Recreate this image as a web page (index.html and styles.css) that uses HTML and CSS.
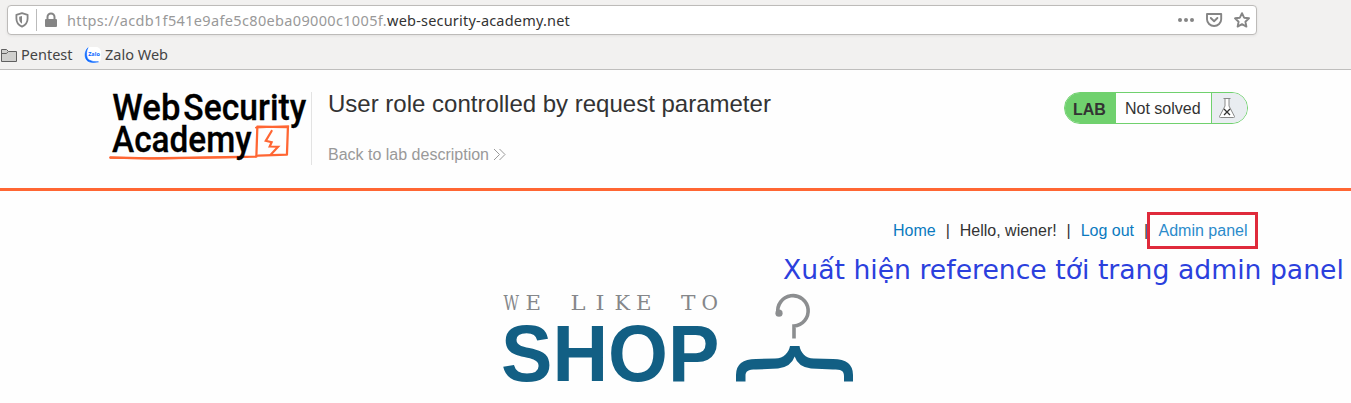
FILE: index.html
```html
<!DOCTYPE html>
<html lang="en">
<head>
<meta charset="utf-8">
<title>User role controlled by request parameter</title>
<link rel="stylesheet" href="styles.css">
</head>
<body>
<div class="browser">
  <div class="urlbar">
    <svg class="shield" width="14" height="16" viewBox="0 0 14 16"><path d="M7 1.2L12.6 2.8V6.5C12.6 10.5 10.5 13.2 7 14.7C3.500 13.200 1.400 10.500 1.400 6.500V2.800Z" fill="none" stroke="#858585" stroke-width="1.8" stroke-linejoin="round"/><path d="M7 4L4.200 4.700V6.500C4.200 9 5.200 10.700 7 11.800Z" fill="#858585"/></svg>
    <span class="divider"></span>
    <svg class="lock" width="14" height="16" viewBox="0 0 14 16"><path d="M3.500 8V5a3.500 3.500 0 0 1 7 0V8" fill="none" stroke="#858585" stroke-width="2"/><rect x="1" y="7" width="12" height="8" rx="1" fill="#858585"/></svg>
    <span class="url"><span class="sub">https://acdb1f541e9afe5c80eba09000c1005f.</span><span class="domain">web-security-academy.net</span></span>
    <svg class="actions" width="76" height="18" viewBox="0 0 76 18" fill="none" stroke="#858585" stroke-width="1.900" stroke-linejoin="round" stroke-linecap="round"><g fill="#858585" stroke="none"><circle cx="4" cy="9" r="2"/><circle cx="10" cy="9" r="2"/><circle cx="16" cy="9" r="2"/></g><path d="M31 3H45.200V8.200a7.100 6.800 0 0 1-14.200 0ZM34.800 7L38.100 10.200L41.400 7"/><path d="M66 2.200L68.100 6.700L73 7.300L69.400 10.700L70.400 15.600L66 13.200L61.600 15.600L62.600 10.700L59 7.300L63.900 6.700Z"/></svg>
  </div>
  <div class="bookmarks">
    <svg width="17" height="16" viewBox="0 0 17 16"><path d="M1.500 14.500V2.500H6.500L8.500 4.500H16.500V14.500Z" fill="#d0d0ce" stroke="#606060"/><path d="M2 6.500H6.500L8 4.800" fill="none" stroke="#606060"/></svg>
    <span class="pentest">Pentest</span>
    <svg class="zalo" width="16" height="16" viewBox="0 0 16 16"><rect width="16" height="16" rx="5" fill="#fff"/><path d="M3 .7C-1 4.500-.7 12 3 14.300Q6 16.300 13.500 14.800Q8 15.300 4 13C.8 10.500 1 4 3 .7Z" fill="#0b68ff" stroke="#0b68ff" stroke-width=".6"/><text x="3.200" y="9.300" textLength="11.600" lengthAdjust="spacingAndGlyphs" class="zalo-text">Zalo</text></svg>
    <span class="zaloweb">Zalo Web</span>
  </div>
</div>
<header class="lab-header">
  <svg class="academy" width="203" height="74" viewBox="0 0 203 74">
    <g fill="none" stroke="#ff6633" stroke-linejoin="round" stroke-linecap="round"><path d="M1 66.400L40 67.200L149 65.600L150 35.200L181 35.600L180 63.500L151 64.500" stroke-width="2.300"/><path d="M1 66.600L50 67.300L140 65.800" stroke-width="2"/><path d="M148.500 36L181.500 34.500" stroke-width="1.800"/><path d="M164.500 39.500L158.500 49.500L164.500 51L162.500 55.300L171 55.500L163.500 63.500" stroke-width="2.200" stroke-linejoin="miter"/></g>
    <g class="academy-text"><text x="3" y="28.600" textLength="69" lengthAdjust="spacingAndGlyphs">Web</text><text x="75" y="28.600" textLength="124.500" lengthAdjust="spacingAndGlyphs">Security</text><text x="2.700" y="61.300" textLength="141.500" lengthAdjust="spacingAndGlyphs">Academy</text></g>
  </svg>
  <div class="title-block">
    <h1>User role controlled by request parameter</h1>
    <a class="back">Back to lab description<svg width="13" height="14" viewBox="0 0 13 14" fill="none" stroke="#999" stroke-width="1"><path d="M1 1L6.500 6.500L1 12M6.500 1L12 6.500L6.500 12"/></svg></a>
  </div>
  <div class="status"><b>LAB</b><span class="state">Not solved</span><span class="flask"><svg width="18" height="22" viewBox="0 0 18 22" fill="none"><path d="M5.500 1.500H12.500M7 2V9L1.500 19.500Q1.200 20.500 2.500 20.500H15.500Q16.800 20.500 16.500 19.500L11 9V2" fill="#fff" stroke="#888"/><path d="M6 12L12 18M12 12L6 18" stroke="#333" stroke-width="1.300"/></svg></span></div>
</header>
<main class="shop">
  <nav class="links"><a>Home</a><i>|</i><span>Hello, wiener!</span><i>|</i><a>Log out</a><i>|</i><a class="admin">Admin panel</a></nav>
  <div class="note">Xuất hiện reference tới trang admin panel</div>
  <svg class="brand" width="352" height="92" viewBox="0 0 352 92">
    <g class="like">
      <text x="1.500" y="17" textLength="15.500" lengthAdjust="spacingAndGlyphs">W</text><text x="23.500" y="17" textLength="15.500" lengthAdjust="spacingAndGlyphs">E</text>
      <text x="68.500" y="17" textLength="15" lengthAdjust="spacingAndGlyphs">L</text><text x="93.500" y="17" textLength="9" lengthAdjust="spacingAndGlyphs">I</text><text x="112.500" y="17" textLength="15.500" lengthAdjust="spacingAndGlyphs">K</text><text x="134" y="17" textLength="15.500" lengthAdjust="spacingAndGlyphs">E</text>
      <text x="179" y="17" textLength="14.500" lengthAdjust="spacingAndGlyphs">T</text><text x="199.500" y="17" textLength="16.500" lengthAdjust="spacingAndGlyphs">O</text>
    </g>
    <text x="-1" y="88" textLength="218.500" lengthAdjust="spacingAndGlyphs" class="word">SHOP</text>
    <path d="M276 20.500A15.200 15.200 0 1 1 292 33V45.500" fill="none" stroke="#8c8e90" stroke-width="3.600"/><circle cx="277" cy="20.200" r="3.600" fill="#8c8e90"/>
    <path d="M288 53H297.500C298.500 59 303 65.500 312 65.500L331 66Q351 66 351 82V88.500H342V83C342 77.500 339 76.500 331 76.500L309 75.500Q296 74 292.700 63.500Q289 74 276 75.500L254 76.500C246 76.500 243.500 78 243.500 83V88.500H234V82Q234 66 254 66L273 65.500C282 65.500 287 59 288 53Z" fill="#125f84"/>
  </svg>
</main>
</body>
</html>
```
FILE: styles.css
```css
* { box-sizing: border-box; }
body { margin: 0; height: 403px; overflow: hidden; background: #fefefe; color: #333; font: 16px/20px "Liberation Sans", Arial, sans-serif; }
svg { display: block; flex: none; overflow: visible; }
.browser { height: 70px; padding: 5px 0 0; background: #f2f1f0; border-bottom: 1px solid #bfbebd; font: 15px/20px "Noto Sans", sans-serif; white-space: nowrap; }
.urlbar { display: flex; align-items: center; width: 1250px; height: 30px; margin-left: 7px; padding: 0 4px 0 7px; background: #fff; border: 1px solid #bdbbb9; border-radius: 4px; box-shadow: 0 1px 3px #0001; }
.divider { width: 1px; height: 22px; margin: 0 7px; background: #bbb; }
.url { margin-left: 9px; font-size: 14.5px; }
.sub { color: #999; letter-spacing: .34px; }
.domain { color: #333; letter-spacing: .2px; }
.actions { margin-left: auto; }
.bookmarks { display: flex; align-items: center; height: 34px; padding-top: 5px; color: #444; font-size: 14.5px; }
.bookmarks span { padding-bottom: 1px; }
.pentest { margin-left: 4px; width: 64px; }
.zaloweb { margin-left: 4px; }
.zalo-text { font: bold 5.5px "Open Sans", sans-serif; fill: #0b68ff; }
.lab-header { display: flex; height: 121px; padding: 22px 103px 0 108px; border-bottom: 3px solid #ff6633; }
.academy { height: 73px; }
.academy-text { font: 500 37.5px Roboto, sans-serif; fill: #000; stroke: #000; stroke-width: .3; }
.title-block { height: 73px; padding-left: 16px; border-left: 1px solid #e3e3e3; }
h1 { margin: 0; font-size: 24px; line-height: 24px; font-weight: 400; white-space: nowrap; }
.back { display: flex; align-items: center; gap: 4px; margin-top: 29px; color: #999; }
.status { display: flex; width: 184px; height: 32px; margin-left: auto; overflow: hidden; border: 1px solid #70d16e; border-radius: 16px; line-height: 31px; }
.status b { width: 51px; padding: 1px 0 0 8px; background: #70d16e; }
.state { width: 95px; padding-left: 9px; background: #fff; white-space: nowrap; }
.flask { flex: 1; padding: 4px 0 0 6px; background: #e9edf1; border-left: 1px solid #70d16e; }
.shop { display: flex; flex-direction: column; }
.links { display: flex; align-items: center; align-self: flex-end; height: 37px; margin: 21px 93px 0 0; white-space: nowrap; }
.links a { color: #0a7abf; }
.links i { width: 24px; text-align: center; font-style: normal; }
.links .admin { height: 37px; margin-left: -11px; padding: 6px 7.5px 0 8.5px; border: 3px solid #df2a3b; color: #2b8bcb; }
.note { margin: 4px 0 0 783px; color: #2b40dd; font: 26.667px/34px "DejaVu Sans", sans-serif; white-space: nowrap; }
.brand { margin: 6px 0 0 502px; }
.like { font: 20.5px "DejaVu Serif", serif; fill: #85878a; }
.word { font: bold 79px "Liberation Sans", Arial, sans-serif; fill: #125f84; }
```
